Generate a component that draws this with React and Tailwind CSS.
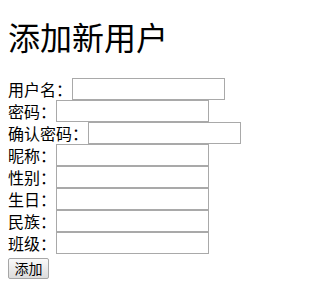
import React from 'react';

const fields = [
    { label: '用户名：', width: 'w-[64px]' },
    { label: '密码：', width: 'w-[48px]' },
    { label: '确认密码：', width: 'w-[80px]' },
    { label: '昵称：', width: 'w-[48px]' },
    { label: '性别：', width: 'w-[48px]' },
    { label: '生日：', width: 'w-[48px]' },
    { label: '民族：', width: 'w-[48px]' },
    { label: '班级：', width: 'w-[48px]' },
];

const App = () => {
    return (
        <div className="w-[256px] h-[302px] bg-white px-[8px] text-black font-['Noto_Sans_CJK_SC',sans-serif]">
            <h1 className="pt-[20px] mb-[26px] text-[32px] leading-[32px] font-normal">添加新用户</h1>
            <form className="flex flex-col">
                {fields.map((f) => (
                    <div key={f.label} className="flex items-center h-[22px]">
                        <span className={`${f.width} text-[16px] leading-[16px] whitespace-nowrap`}>{f.label}</span>
                        <input
                            type="text"
                            className="w-[153px] h-[22px] border border-[#a9a9a9] bg-white outline-none"
                        />
                    </div>
                ))}
                <div className="pt-[1px]">
                    <button
                        type="button"
                        className="w-[41px] h-[21px] border border-[#a6a6a6] rounded-[2px] bg-gradient-to-b from-[#fafafa] to-[#dcdcdc] text-[14px] leading-[14px] text-black"
                    >
                        添加
                    </button>
                </div>
            </form>
        </div>
    );
};

export default App;
